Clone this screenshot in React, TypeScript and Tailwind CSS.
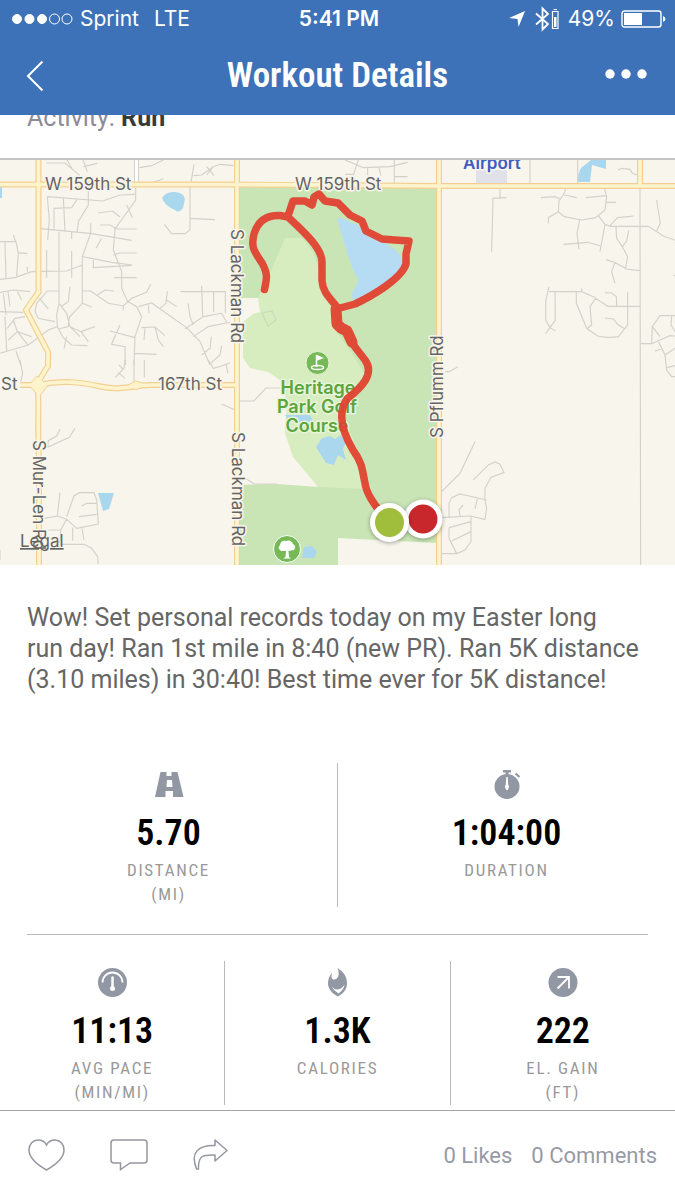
import React from "react";

const BODY = "font-['Roboto',sans-serif]";
const SYSTEM = "font-['Inter',sans-serif]";
const NARROW = "font-['Roboto_Condensed','Roboto',sans-serif]";

const MINOR_NW = `M142 125L148 195L143 255M142 125L308 138L360 120L405 118M190 127L195 228M122 221L270 235L395 256
M162 226V160L215 158L232 132M265 100V150L235 200L232 230M248 12L262 50M140 24H195L240 62M200 12L215 40M250 35L292 25
M407 95V135L345 222L340 285L365 350V400L382 438L410 455L425 485L405 545L402 630M294 174L338 168L360 186M380 150L397 188
M300 210H330L350 222H410M272 205V235L247 305L335 322L397 330M280 310V338L395 331M340 300L358 294H410M343 368H410
M305 250L288 280M177 230V445L200 475L210 515L240 545M215 232V252M140 285V368M215 288V368M247 305V445L208 487L205 515L175 522
M0 373L45 368L95 350L200 348L247 330M0 260H48L55 295L50 365M15 262L18 370M40 240L48 262M55 293L82 296M82 335V350
M0 412L40 405L90 410M10 415L18 480M24 410L30 455M52 410L65 435M0 470L70 472M175 408H142L110 445L105 470L115 490L165 500
M118 430L145 462M177 445L170 480L172 515L145 525L85 570L0 595M182 455L205 440L210 395M172 515L190 548L215 570L262 572M210 515L243 530L285 515
M243 530L265 560M200 545L192 580M15 485L20 590M22 520L45 490L75 485M25 555L52 530L95 545M52 530L40 495M52 530L85 572M48 588L62 630
M247 408H272L325 445L370 453L395 430L440 412L452 388M292 420L315 405L342 408M247 445L275 456M370 453V466M415 455L455 444L560 518L600 560L630 630
M445 445L447 475M480 460L498 445L502 408M500 435L530 455M541 410H676V475M605 392L608 482M641 410V472M564 445L570 485L580 510M555 522L610 485L665 475L682 505
M580 545L625 515L690 502M634 545L630 580L605 600M665 572L660 600L632 625M425 518L465 516L495 542M435 518L432 555M465 516L475 555L490 575
M360 510L335 568L375 575L376 630M330 528L405 548M345 542L335 568M402 595L470 598M418 38L455 32L490 15M458 82L490 72
M582 28L570 100V225L555 236H515L493 208M570 190L645 194M580 62L605 60L640 35L660 28L700 32M620 35L642 62M640 35L620 60`;

const MINOR_SW = `M60 0L68 40L62 65M375 0L372 25L346 52M355 38L375 55M357 15L370 28M402 0V65M433 0V52
M180 208L170 228L145 242L143 262L208 232L225 205M625 0L640 25L665 18L690 8M678 12L684 40M665 132L705 150
M132 475L172 468L180 398M172 468L200 478L182 510L180 550M200 478L230 505L295 492L290 420L282 398H238L222 408L200 470M245 438L260 430H290M237 470L290 463
M145 510H182M218 503V542M246 505L252 540M180 553H252L275 565L293 590L295 612M0 570V600`;

const MINOR_E = `M170 292L174 130L215 128M195 98V128M285 15V85M428 15V85M550 45L560 40L585 43L592 55L608 60M318 128L360 125L375 132M393 98L388 115L372 138L370 170L388 185L440 195L482 188L510 165L515 125L508 98
M388 120L425 128M452 128L515 122M515 142H543M370 170L340 188V205M434 195L426 235L432 283M386 268L458 262L497 273M490 182L510 208L495 290M510 208L525 214H640L685 243L720 256
M525 212L548 188L597 183M543 215L545 250L562 275L578 305L572 340L538 322L513 314M562 275L575 258L581 227M572 342L615 347M540 322L530 350L540 385
M665 135L676 205L665 228M615 98L617 1230M342 410H440L475 425L518 454H614M342 395L332 440V495L345 518L362 528M360 410L361 495L332 536M440 400V410
M424 410V445L455 520L488 543L520 548L550 545L578 510V410M482 430L465 455L470 510L455 522M510 413L530 414L544 425L545 452M510 489L535 492L550 510L570 522
M618 566H650L705 542L720 543M720 482H675L652 515L650 565M652 515L675 545M668 555L690 600L695 645L710 665H720M660 588L678 583M690 600L720 580M695 638L720 632M710 485L708 510L720 530M714 360L720 362
M30 650H42L68 636M120 860L75 955L20 1010M115 975L160 930L180 921L195 928L207 953L168 967L150 1000V1035M155 1035L75 1017L50 1028L42 1045V1085M20 1088L108 1083L150 1094L155 1060L150 1035
M127 1032L120 1062M85 1050L72 1065L76 1085M108 1083V1160L90 1185L65 1196H20M42 1118L108 1100M42 1118V1150L65 1196M50 1158L108 1130`;

const MAJOR = `M0 184.5H230C300 184.5 380 186 440 186H675M38.5 160V292L26 310L48 352V366L37 384C40 400 37 420 39 460V565M37 385C65 380 80 382 98 386C118 391 130 386 150 385H237M20 385H37M237 160V565M439 160V565M640 160V186`;

const ROUTE = `M264.5 289.5C267 278 268 274 262 263C253 250 251 246 254 234C258 220 268 215 280 215.5L288 217C304 232 322 248 322 262V281C323 293 330 298 337 307
M288 216L293 201H305L312 205L314 197L319 194L325 201L338 203L344 209L350 215L362 221L366 231L382 239L395 240L409 241L406 254V264C402 278 374 295 355 304L340 308
M336 308L338 326L346 330L355 347L365 360C375 374 362 387 347 399C338 412 340 428 353 450C363 464 362 470 365 483C366 493 375 506 381 512`;

function WorkoutMap() {
  return (
    <svg viewBox="0 160 675 405" className="block w-full bg-[#f8f5ec]" role="img" aria-label="Route map">
      <path d="M237 187H437V543L338 538V565H237Z" fill="#c9e5b6" />
      <path d="M237 298H262L300 330L340 420L318 487L277 484L237 485Z" fill="#f8f5ec" />
      <path d="M285 238H302L313 252L320 272L322 290L332 305L337 332L353 355L365 375L345 400L342 415L358 450L366 489L318 487L293 457L285 433L287 400L280 380L268 372L250 368L243 358V322L253 314L260 312L258 298L267 280Z" fill="#d8edbf" />
      <path d="M240 401H254L266 388H280M245 478L254 484H277" fill="none" stroke="#d4d1cb" strokeWidth="1.2" />
      <path d="M262 313L272 311L276 320L268 326Z" fill="none" stroke="#cbd9b9" strokeWidth="1.2" />
      <path d="M337 219Q342 217 348 221L360 226L366 233L381 241Q402 252 403 262Q400 276 380 287L354 301Q350 296 354 289Q360 281 357 277Q352 270 347 252Z" fill="#b5dcf3" />
      <path d="M316 447L322 438L330 436L335 439L341 435L346 442L343 449L346 460L338 455L334 465L326 463ZM285 415H310L313 421L300 424L288 420ZM304 547L312 546L317 552L314 558H302Z" fill="#aad7ee" />
      <path d="M162 198Q166 191 175 192Q184 193 185 199L183 208Q179 214 175 210Q165 206 162 198ZM98 493H114L109 509L103 511ZM0 187H2V198H0ZM578 182Q577 169 586 164L591 160H606V169L592 165L590 182Z" fill="#a9d7ed" />
      <rect x="476" y="170" width="31" height="14" fill="#e1e2e9" />
      <g fill="none" stroke="#d4d1cb" strokeWidth="3.4">
        <path transform="translate(0 155) scale(.3333)" d={MINOR_NW} />
        <path transform="translate(0 360) scale(.3333)" d={MINOR_SW} />
        <path transform="translate(435 155) scale(.3333)" d={MINOR_E} />
        <path transform="translate(230 155) scale(.3333)" d="M345 15L400 38L480 35L533 22M385 15L370 60M413 38V60M447 38L453 62M493 15V85M493 65H533M345 58H372" />
      </g>
      <path d="M136.500 160V186" stroke="#d4d1cb" strokeWidth="5" />
      <path d="M136.500 160V186" stroke="#fff" strokeWidth="3" />
      <path d={MAJOR} fill="none" stroke="#f3d091" strokeWidth="6" />
      <path d="M29 385L37 376L48 385L39 397ZM128 385L136 381L146 384L136 390Z" fill="#fdf3c8" stroke="#f3d091" />
      <path d={MAJOR} fill="none" stroke="#fdf4cd" strokeWidth="3.6" />

      <g className={SYSTEM} fontSize="17" fill="#666463" stroke="#f8f5ec" strokeWidth="3" paintOrder="stroke" strokeLinejoin="round">
        <text x="45" y="190">W 159th St</text>
        <text x="295" y="190">W 159th St</text>
        <text x="1" y="390">St</text>
        <text x="158" y="390">167th St</text>
        <text transform="translate(231 229) rotate(90)">S Lackman Rd</text>
        <text transform="translate(232 432) rotate(90)">S Lackman Rd</text>
        <text transform="translate(33 440) rotate(90)">S Mur-Len Rd</text>
        <text transform="translate(443 438) rotate(-90)">S Pflumm Rd</text>
        <text x="20" y="547" stroke="none" textDecoration="underline">Legal</text>
        <text x="463" y="169" fontWeight="600" fill="#3d5cc4">Airport</text>
        <g fill="#5ba53d" stroke="#e8f4d8" fontWeight="600" fontSize="18" textAnchor="middle">
          <text x="318" y="394">Heritage</text>
          <text x="317" y="413">Park Golf</text>
          <text x="317" y="432">Course</text>
        </g>
      </g>

      <circle cx="317.500" cy="363" r="11.500" fill="#76b957" stroke="#e8f4d8" />
      <path d="M316.500 355V367" stroke="#fff" strokeWidth="1.500" />
      <path d="M316 354.500L324 358L316 361Z" fill="#fff" />
      <ellipse cx="317.500" cy="367.500" rx="6" ry="2" fill="none" stroke="#fff" strokeWidth="1.500" />
      <circle cx="287" cy="549" r="13.500" fill="#76b957" stroke="#fff" />
      <path d="M285.500 557L286 551H281Q277 548 280 545Q281 540 286 541Q291 539 293 544Q297 546 294 550L288.500 551L289 557L291 558.500H283Z" fill="#fff" />

      <g fill="none" stroke="#e2402f" strokeLinecap="round" strokeLinejoin="round" opacity=".93">
        <path d={ROUTE} strokeWidth="7.500" />
        <path d="M336 309L337 324L341 328L347 331L352 342" strokeWidth="11" />
      </g>
      <g className="drop-shadow-[0_1px_2px_rgba(0,0,0,0.35)]">
        <circle cx="423" cy="519" r="19.500" fill="#fff" />
        <circle cx="423" cy="519" r="14.500" fill="#c8272b" />
      </g>
      <g className="drop-shadow-[0_1px_2px_rgba(0,0,0,0.35)]">
        <circle cx="389.500" cy="522.500" r="19.500" fill="#fff" />
        <circle cx="389.500" cy="522.500" r="14.500" fill="#a1bd3c" />
      </g>
    </svg>
  );
}

const icon = "size-8 text-[#9197a3]";

const RoadIcon = () => (
  <svg viewBox="0 0 32 32" className={icon} fill="currentColor" aria-hidden="true">
    <path d="M7.500 3H13.500V7H18.500V3H24.500L30.500 28H20V22H12.500V28H2ZM14 11L13.500 18H19.500L19 11Z" fillRule="evenodd" />
  </svg>
);
const StopwatchIcon = () => (
  <svg viewBox="0 0 32 32" className={icon} fill="currentColor" aria-hidden="true">
    <path d="M12 1H20V3.500H17.500V6H14.500V3.500H12Z" />
    <circle cx="16" cy="17.500" r="12.500" />
    <path d="M24.500 4.500L28.500 8" stroke="currentColor" strokeWidth="2.200" />
    <path d="M15.300 8H16.700L17.200 15.500Q18.800 17.500 17.600 19L16.800 21H15.200L14.400 19Q13.200 17.500 14.800 15.500Z" fill="#fff" />
  </svg>
);
const GaugeIcon = () => (
  <svg viewBox="0 0 32 32" className={icon} aria-hidden="true">
    <circle cx="16.500" cy="15.500" r="14.500" fill="currentColor" />
    <path d="M6.500 15.500A10 10 0 0 1 26.500 15.500" fill="none" stroke="#fff" strokeWidth="1.800" />
    <path d="M16.500 10.500V21" stroke="#fff" strokeWidth="2.500" strokeLinecap="round" />
    <circle cx="16.500" cy="21.500" r="2.500" fill="#fff" />
  </svg>
);
const FlameIcon = () => (
  <svg viewBox="0 0 32 32" className={icon} fill="currentColor" aria-hidden="true">
    <path d="M16.500 1C24.500 6 26 11.500 26 16.500C26 22 22.500 26.500 17 29.500C11 26.500 7 21.500 7 16.500C7 12 8.500 9 11 6C10 10 10.500 12.500 13 12.500C16.500 12.500 19.500 8 16.500 1Z" />
    <path d="M10.500 19.500Q13 22.500 16 22.500Q20 22.500 23.500 18Q23 22.500 17.500 26.500Q12.500 23.500 10.500 19.500Z" fill="#fff" />
  </svg>
);
const GainIcon = () => (
  <svg viewBox="0 0 32 32" className={icon} aria-hidden="true">
    <circle cx="16" cy="15.500" r="14.500" fill="currentColor" />
    <path d="M10.500 10H22V21.500M22 10L10.500 21.500" fill="none" stroke="#fff" strokeWidth="1.800" />
  </svg>
);

type StatProps = { icon: React.ReactNode; value: string; label: string; unit?: string };

function Stat({ icon, value, label, unit }: StatProps) {
  return (
    <div className="flex min-h-36 flex-1 flex-col items-center pt-1.5 text-center">
      {icon}
      <strong className={`${NARROW} mt-2.5 text-[36px] leading-11 font-semibold text-black`}>{value}</strong>
      <span className={`${NARROW} mt-[3px] text-[17px] leading-6 tracking-widest text-[#999]`}>
        {label}
        {unit && <span className="block">{unit}</span>}
      </span>
    </div>
  );
}

export default function App() {
  return (
    <div className={`${BODY} flex min-h-screen flex-col bg-white`}>
      <header className="relative z-10 bg-[#3d72b8] text-white">
        <div className={`${SYSTEM} grid h-9 grid-cols-3 items-center pt-0.5 pr-2 pl-[11px] text-[21px] leading-6`}>
          <div className="flex items-center gap-[7px]">
            <svg viewBox="0 0 62 12" className="h-3 w-[62px]" fill="#fff" stroke="#fff" aria-hidden="true">
              <circle cx="6" cy="6" r="4.500" /><circle cx="18.500" cy="6" r="4.500" /><circle cx="31" cy="6" r="4.500" />
              <circle cx="43.500" cy="6" r="5" fill="none" /><circle cx="56" cy="6" r="5" fill="none" />
            </svg>
            <span>Sprint</span>
            <span className="ml-2">LTE</span>
          </div>
          <span className="text-center font-semibold">5:41 PM</span>
          <div className="flex items-center justify-end">
            <svg viewBox="0 0 18 18" className="size-[18px]" fill="#fff" aria-hidden="true"><path d="M17 1L10.500 17L9.500 9L1 8Z" /></svg>
            <svg viewBox="0 0 26 26" className="ml-2 size-[26px]" fill="none" stroke="#fff" strokeWidth="1.800" aria-hidden="true">
              <path d="M2 7.500L14 18L8.500 23.500V2.500L14 8L2 18.500" />
              <path d="M18.500 5.500H24V22.500H18.500ZM19.500 3.500H23" strokeWidth="1.200" />
              <path d="M21.250 11V21" strokeWidth="2.500" />
            </svg>
            <span className="ml-2">49%</span>
            <svg viewBox="0 0 46 18" className="ml-1.5 h-[18px] w-[46px]" fill="none" stroke="#fff" aria-hidden="true">
              <rect x="1" y="1" width="39" height="16" rx="2.500" strokeWidth="1.400" />
              <path d="M3 3H21V15H3Z" fill="#fff" stroke="none" />
              <path d="M42 6Q44.500 7 44.500 9Q44.500 11 42 12Z" fill="#fff" stroke="none" />
            </svg>
          </div>
        </div>
        <div className="grid h-[79px] grid-cols-[80px_1fr_80px] items-center">
          <button aria-label="Back" className="ml-[26px] w-fit">
            <svg viewBox="0 0 18 32" className="h-8 w-[18px]" fill="none" stroke="#fff" strokeWidth="2"><path d="M16.500 1.500L2 16L16.500 30.500" /></svg>
          </button>
          <h1 className={`${NARROW} text-center text-[35px] leading-10 font-semibold`}>Workout Details</h1>
          <button aria-label="More" className="mr-7 mb-1 w-fit justify-self-end">
            <svg viewBox="0 0 42 10" className="h-2.5 w-[42px]" fill="#fff"><circle cx="5" cy="5" r="4.700" /><circle cx="21" cy="5" r="4.700" /><circle cx="37" cy="5" r="4.700" /></svg>
          </button>
        </div>
      </header>

      <main className="flex-1">
        <p className="-mt-3 border-b-2 border-[#c4c4c2] px-[27px] pb-[25px] text-[25px] leading-[30px] text-[#8d8b98]">
          Activity: <b className="font-bold text-[#3a3a3a]">Run</b>
        </p>
        <WorkoutMap />
        <p className="px-[27px] pt-[37px] text-[25px] leading-[31px] text-[#666]">
          Wow! Set personal records today on my Easter long
          <br />
          run day! Ran 1st mile in 8:40 (new PR). Ran 5K distance (3.10 miles) in 30:40! Best time ever for 5K distance!
        </p>
        <section className="mt-[68px] flex divide-x divide-[#b9b9b9]">
          <Stat icon={<RoadIcon />} value="5.70" label="DISTANCE" unit="(MI)" />
          <Stat icon={<StopwatchIcon />} value="1:04:00" label="DURATION" />
        </section>
        <hr className="mx-[27px] mt-[27px] mb-[26px] border-[#b9b9b9]" />
        <section className="mb-[5px] flex divide-x divide-[#b9b9b9]">
          <Stat icon={<GaugeIcon />} value="11:13" label="AVG PACE" unit="(MIN/MI)" />
          <Stat icon={<FlameIcon />} value="1.3K" label="CALORIES" />
          <Stat icon={<GainIcon />} value="222" label="EL. GAIN" unit="(FT)" />
        </section>
      </main>

      <footer className="flex h-[90px] items-center border-t border-[#a5a5a8] pr-[18px] pl-7 text-[22px] leading-7 text-[#979aa5]">
        <div className="flex items-center gap-11">
          <button aria-label="Like">
            <svg viewBox="0 0 38 34" className="h-[34px] w-[38px]" fill="none" stroke="#9597a1" strokeWidth="1.500"><path d="M18.500 31C8 25 1 18 1 11C1 5 5 1 10 1C14 1 17 3 18.500 6C20 3 23 1 27 1C32 1 36 5 36 11C36 18 29 25 18.500 31Z" /></svg>
          </button>
          <button aria-label="Comment">
            <svg viewBox="0 0 38 34" className="h-[34px] w-[38px]" fill="none" stroke="#9597a1" strokeWidth="1.500"><path d="M4 1H34Q37 1 37 4V21Q37 24 34 24H20L10.500 30.500V24H4Q1 24 1 21V4Q1 1 4 1Z" /></svg>
          </button>
          <button aria-label="Share">
            <svg viewBox="0 0 38 34" className="h-[34px] w-[38px]" fill="none" stroke="#9597a1" strokeWidth="1.500" strokeLinejoin="round"><path d="M23 1L35 11.500L23 22V16C11 15.500 6 16.500 6.500 30H4.500C-2 13.500 6 6 23 6.500Z" /></svg>
          </button>
        </div>
        <div className="ml-auto flex gap-[19px]">
          <a href="#likes">0 Likes</a>
          <a href="#comments">0 Comments</a>
        </div>
      </footer>
    </div>
  );
}
